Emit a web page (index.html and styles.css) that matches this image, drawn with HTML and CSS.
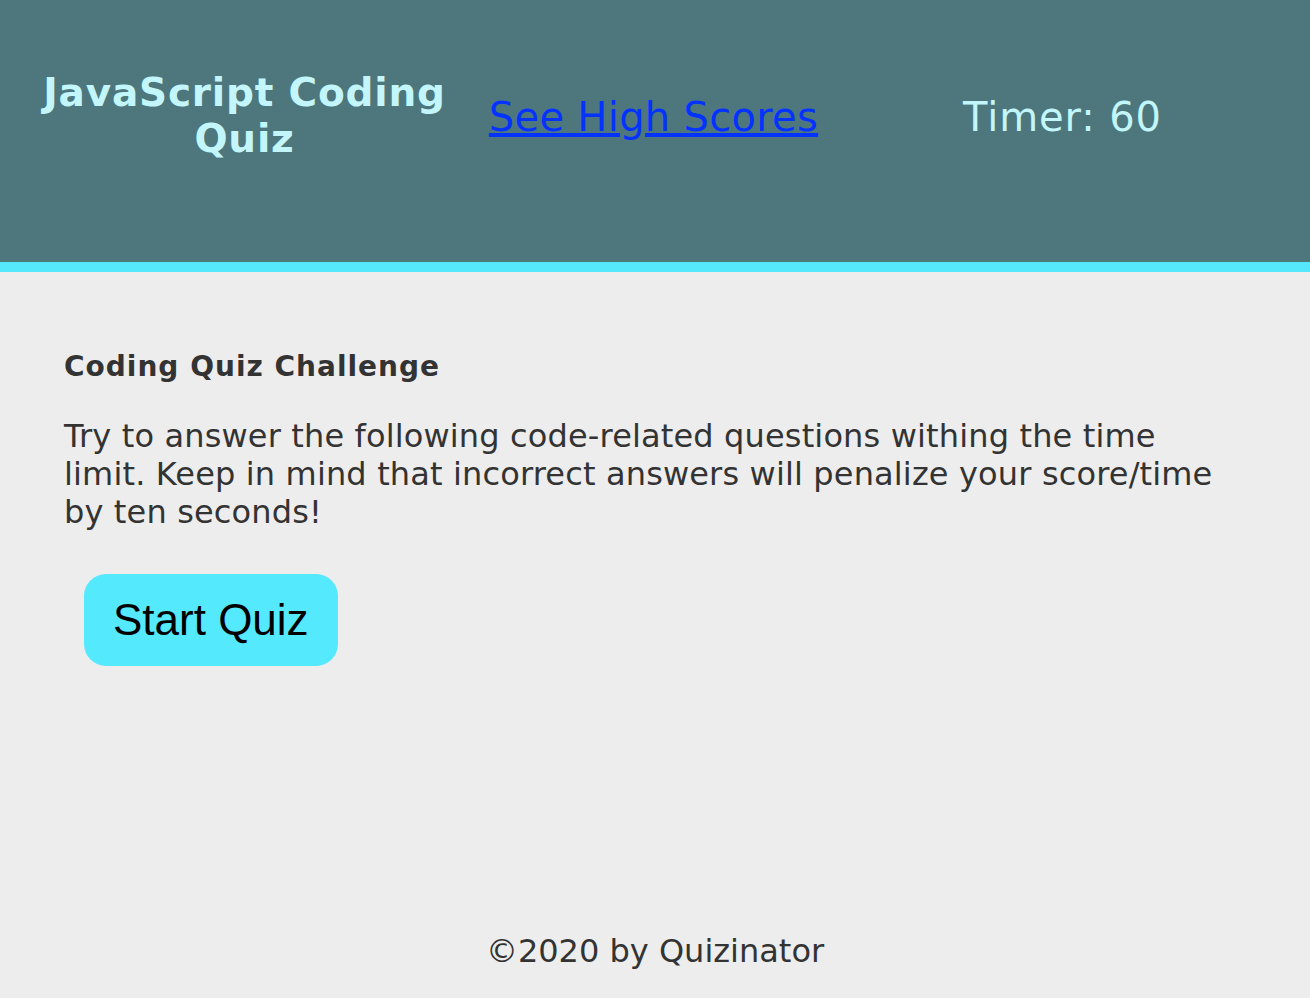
FILE: index.html
```html
<!DOCTYPE html>
<html lang="en">
<head>
<meta charset="utf-8">
<title>JavaScript Coding Quiz</title>
<link rel="stylesheet" href="styles.css">
</head>
<body>
<header class="site-header">
  <h1 class="brand">JavaScript Coding Quiz</h1>
  <a class="scores-link" href="#">See High Scores</a>
  <div class="timer">Timer: 60</div>
</header>
<main class="content">
  <h2 class="intro-title">Coding Quiz Challenge</h2>
  <p class="intro-text">Try to answer the following code-related questions withing the time limit. Keep in mind that incorrect answers will penalize your score/time by ten seconds!</p>
  <button class="start-btn" type="button">Start Quiz</button>
</main>
<footer class="site-footer">©2020 by Quizinator</footer>
</body>
</html>
```
FILE: styles.css
```css
html, body {
  margin: 0;
  padding: 0;
}
body {
  background: #ededed;
  color: #333333;
  font-family: "DejaVu Sans", Verdana, sans-serif;
  min-height: 998px;
  display: flex;
  flex-direction: column;
}
.site-header {
  background: #4d777d;
  border-bottom: 10px solid #55e8fc;
  box-sizing: border-box;
  height: 272px;
  padding: 70px 43px 0 40px;
  display: grid;
  grid-template-columns: repeat(3, 1fr);
  align-items: start;
  justify-items: center;
}
.brand {
  margin: 0;
  font-size: 39px;
  font-weight: bold;
  line-height: 46px;
  letter-spacing: 0.8px;
  color: #c3f6fb;
  text-align: center;
}
.scores-link {
  margin-top: 24px;
  font-size: 40px;
  line-height: 46px;
  letter-spacing: 0.3px;
  color: #0433ff;
}
.timer {
  margin-top: 24px;
  font-size: 40px;
  line-height: 46px;
  letter-spacing: 0.9px;
  color: #c3f6fb;
}
.content {
  padding: 78px 80px 0 64px;
  flex: 1;
}
.intro-title {
  margin: 0;
  font-size: 28px;
  line-height: normal;
  letter-spacing: 1px;
  font-weight: bold;
}
.intro-text {
  margin: 34px 0 0;
  font-size: 32px;
  line-height: 38px;
  letter-spacing: 0.15px;
}
.start-btn {
  display: block;
  margin: 43px 0 0 20px;
  background: #55e9fd;
  border: none;
  border-radius: 22px;
  height: 92px;
  padding: 0 29px;
  font-family: "Liberation Sans", Arial, sans-serif;
  font-size: 44px;
  color: #000;
}
.site-footer {
  text-align: center;
  font-size: 32px;
  padding: 0 0 28px;
}
```
